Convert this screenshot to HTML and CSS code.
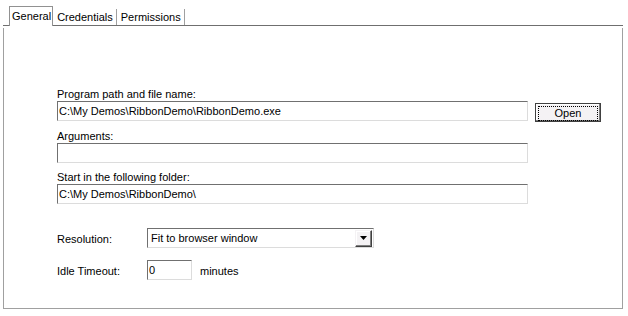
FILE: index.html
```html
<!DOCTYPE html>
<html lang="en">
<head>
    <meta charset="UTF-8">
    <title>Application Settings</title>
    <link rel="stylesheet" href="styles.css">
</head>
<body>
    <div class="window">
        <div class="tab-strip">
            <div class="tab tab-active">General</div>
            <div class="tab">Credentials</div>
            <div class="tab">Permissions</div>
        </div>
        <div class="tab-panel">
            <div class="field">
                <label class="field-label">Program path and file name:</label>
                <div class="field-row">
                    <input class="text-box text-wide" type="text" value="C:\My Demos\RibbonDemo\RibbonDemo.exe">
                    <button class="button"><span class="button-face">Open</span></button>
                </div>
            </div>
            <div class="field">
                <label class="field-label">Arguments:</label>
                <input class="text-box text-wide" type="text" value="">
            </div>
            <div class="field">
                <label class="field-label">Start in the following folder:</label>
                <input class="text-box text-wide" type="text" value="C:\My Demos\RibbonDemo\">
            </div>

            <div class="option-row option-first">
                <span class="option-label">Resolution:</span>
                <div class="combo">
                    <span class="combo-text">Fit to browser window</span>
                    <span class="combo-arrow">
                        <svg width="7" height="4" viewBox="0 0 7 4"><path d="M0 0h7L3.5 4z" fill="#000"/></svg>
                    </span>
                </div>
            </div>
            <div class="option-row">
                <span class="option-label">Idle Timeout:</span>
                <input class="text-box text-short" type="text" value="0">
                <span class="unit">minutes</span>
            </div>
        </div>
    </div>
</body>
</html>
```

FILE: styles.css
```css
body {
    margin: 0;
    font-family: "Liberation Sans", Arial, sans-serif;
    font-size: 11px;
    color: #000;
    background: #fff;
}
.window {
    padding: 6px 5px 0 3px;
}

/* tabs */
.tab-strip {
    display: flex;
    align-items: flex-end;
    height: 19px;
    padding-left: 6px;
    border-bottom: 1px solid #6f6f6f;
}
.tab {
    height: 16px;
    line-height: 17px;
    padding: 0 3px 0 4px;
    border-right: 1px solid #a0a0a0;
}
.tab-active {
    height: 19px;
    line-height: 19px;
    margin-bottom: -1px;
    padding: 0 1px 0 2px;
    border: 1px solid #919191;
    border-bottom: none;
    background: #fff;
}

/* panel */
.tab-panel {
    box-sizing: border-box;
    height: 281px;
    margin-top: 2px;
    padding: 59px 0 0 53px;
    border: 1px solid #a0a0a0;
    border-top: none;
}
.field {
    margin-bottom: 7px;
}
.field-label {
    display: block;
    height: 14px;
    line-height: 14px;
}
.field-row {
    display: flex;
    align-items: flex-start;
}
.text-box {
    box-sizing: border-box;
    height: 20px;
    margin: 0;
    padding: 0 1px;
    font-family: inherit;
    font-size: 11px;
    color: #000;
    background: #fff;
    border: 1px solid;
    border-color: #707070 #dcdcdc #dcdcdc #707070;
    border-radius: 0;
    outline: none;
    display: block;
}
.text-wide {
    width: 471px;
}
.text-short {
    width: 45px;
}

/* button */
.button {
    box-sizing: border-box;
    width: 66px;
    height: 19px;
    margin: 2px 0 0 7px;
    padding: 2px;
    font-family: inherit;
    font-size: 11px;
    color: #000;
    background: #f4f2f4;
    border: 1px solid #404040;
    border-radius: 0;
    box-shadow: inset -1px -1px 0 #808080, inset 1px 1px 0 #fff;
}
.button-face {
    display: block;
    height: 13px;
    line-height: 12px;
    border: 1px dotted #000;
}

/* option rows */
.option-row {
    display: flex;
    align-items: center;
    height: 20px;
    margin-bottom: 12px;
}
.option-first {
    margin-top: 24px;
}
.option-label {
    width: 90px;
    padding-top: 2px;
}
.unit {
    margin-left: 8px;
    padding-top: 2px;
}
.combo {
    box-sizing: border-box;
    display: flex;
    align-items: center;
    width: 227px;
    height: 20px;
    background: #fff;
    border: 1px solid;
    border-color: #707070 #dcdcdc #dcdcdc #707070;
}
.combo-text {
    flex: 1;
    padding-left: 3px;
}
.combo-arrow {
    box-sizing: border-box;
    display: flex;
    align-items: center;
    justify-content: center;
    width: 17px;
    height: 17px;
    margin-right: 1px;
    background: #f4f2f4;
    border: 1px solid;
    border-color: #f4f2f4 #404040 #404040 #f4f2f4;
    box-shadow: inset -1px -1px 0 #808080, inset 1px 1px 0 #fff;
}
```
